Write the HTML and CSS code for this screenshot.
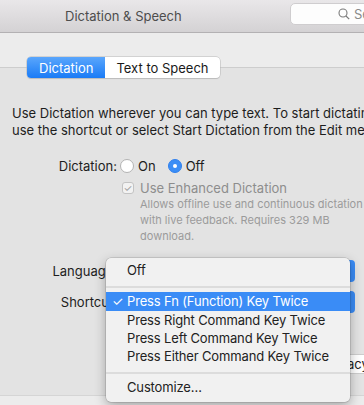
FILE: index.html
```html
<!DOCTYPE html>
<html lang="en">
  <head>
    <meta charset="UTF-8" />
    <title>Dictation &amp; Speech</title>
    <link rel="stylesheet" href="styles.css">
  </head>
  <body>
    <!-- Toolbar -->
    <header class="toolbar">
      <span class="title">Dictation &amp; Speech</span>
      <div class="search">
        <svg width="12" height="12" viewBox="0 0 12 12">
          <circle cx="5" cy="5" r="4" fill="none" stroke="#7a7a7a" stroke-width="1.1" />
          <line x1="8" y1="8" x2="11.2" y2="11.2" stroke="#7a7a7a" stroke-width="1.2" />
        </svg>
        <span>Search</span>
      </div>
    </header>

    <!-- Tabs -->
    <div class="tab-area">
      <div class="segmented">
        <span class="seg active">Dictation</span>
        <span class="seg">Text to Speech</span>
      </div>
    </div>

    <!-- Content box -->
    <main class="box">
      <p class="intro">
        Use Dictation wherever you can type text. To start dictating,<br />
        use the shortcut or select Start Dictation from the Edit menu.
      </p>

      <div class="row">
        <span class="label">Dictation:</span>
        <span class="radio"></span><span class="opt">On</span>
        <span class="radio checked"></span><span class="opt">Off</span>
      </div>

      <div class="check-row">
        <span class="checkbox">&#10003;</span>
        <span>Use Enhanced Dictation</span>
      </div>
      <p class="note">
        Allows offline use and continuous dictation<br />
        with live feedback. Requires 329 MB<br />
        download.
      </p>

      <div class="row popup-row lang-row">
        <span class="label">Language:</span>
        <span class="popup"></span>
      </div>
      <div class="row popup-row">
        <span class="label">Shortcut:</span>
        <span class="popup"></span>
      </div>

      <div class="privacy-row">
        <span class="button">About Dictation and Privacy&hellip;</span>
      </div>

      <!-- Open shortcut menu -->
      <ul class="menu">
        <li>Off</li>
        <li class="sep"></li>
        <li class="selected"><span class="tick">&#10003;</span>Press Fn (Function) Key Twice</li>
        <li>Press Right Command Key Twice</li>
        <li>Press Left Command Key Twice</li>
        <li>Press Either Command Key Twice</li>
        <li class="sep"></li>
        <li>Customize&hellip;</li>
      </ul>
    </main>
    <div class="footer"></div>
  </body>
</html>
```

FILE: styles.css
```css
/* Basic Reset */
* {
  margin: 0;
  padding: 0;
  box-sizing: border-box;
}

body {
  font-family: Inter, "Noto Sans", sans-serif;
  font-size: 13px;
  color: #1d1d1d;
  background-color: #ececec;
  width: 364px;
  height: 405px;
  overflow: hidden;
}

/* Toolbar */
.toolbar {
  height: 33px;
  display: flex;
  align-items: center;
  background: linear-gradient(#e9e7e9, #d4d2d4);
  border-bottom: 1px solid #b3b1b3;
  position: relative;
}

.toolbar .title {
  margin-left: 65px;
  color: #4d4d4d;
  font-size: 13px;
}

.search {
  position: absolute;
  left: 290px;
  top: 3px;
  width: 120px;
  height: 22px;
  background: #fdfdfd;
  border: 1px solid #cfcdcf;
  border-radius: 5px;
  display: flex;
  align-items: center;
  gap: 4px;
  padding-left: 47px;
  color: #8a8a8a;
}

/* Tabs */
.tab-area {
  padding: 24px 0 0 27px;
  margin-bottom: -11px;
  position: relative;
  z-index: 2;
}

.segmented {
  display: inline-flex;
  height: 21px;
  border-radius: 4px;
  background: #fff;
  box-shadow: 0 0 0 0.5px #b8b8b8, 0 1px 1px rgba(0, 0, 0, 0.15);
  overflow: hidden;
}

.seg {
  display: flex;
  align-items: center;
  padding: 0 11px;
  color: #1a1a1a;
}

.seg.active {
  background: linear-gradient(#5aa6fc, #1a7bf6);
  color: #fff;
  padding: 0 12px;
}

/* Content box */
.box {
  position: relative;
  background: #e3e3e3;
  border-top: 1px solid #cdcdcd;
  border-bottom: 1px solid #d5d5d5;
  height: 329px;
  padding: 37px 0 0 12px;
}

.intro {
  line-height: 17px;
  white-space: nowrap;
}

.row {
  display: flex;
  align-items: center;
  height: 17px;
  margin-top: 18px;
}

.label {
  width: 108px;
  text-align: right;
  padding-right: 3px;
}

.radio {
  width: 14px;
  height: 14px;
  border-radius: 50%;
  background: #fff;
  border: 1px solid #b3b3b3;
  margin-right: 4px;
}

.radio.checked {
  background: #3b8ef6;
  border-color: #3080ee;
  position: relative;
}

.radio.checked::after {
  content: "";
  position: absolute;
  left: 4px;
  top: 4px;
  width: 4px;
  height: 4px;
  border-radius: 50%;
  background: #fff;
}

.opt {
  margin-right: 12px;
}

.check-row {
  display: flex;
  align-items: center;
  gap: 6px;
  margin: 5px 0 0 110px;
  color: #8d8d8d;
  height: 17px;
}

.checkbox {
  width: 12px;
  height: 12px;
  border: 1px solid #c3c3c3;
  border-radius: 3px;
  background: #f2f2f2;
  font-size: 10px;
  line-height: 10px;
  text-align: center;
  color: #9a9a9a;
}

.note {
  margin: 0 0 0 128px;
  font-size: 11px;
  line-height: 16px;
  color: #9b9b9b;
  white-space: nowrap;
}

.lang-row {
  margin-top: 15px;
}

.popup-row {
  height: 24px;
}

.popup-row + .popup-row {
  margin-top: 7px;
}

.popup {
  flex: 1;
  height: 22px;
  margin-right: 9px;
  border-radius: 4px;
  background: linear-gradient(to right, #fff 85%, #3a8cf6 85%);
}

.privacy-row {
  display: flex;
  justify-content: flex-end;
  margin-top: 41px;
}

.button {
  background: #fff;
  border-radius: 4px;
  box-shadow: 0 0 0 0.5px #b8b8b8;
  padding: 1px 8px;
  margin-right: -23px;
  white-space: nowrap;
}

/* Popup menu */
.menu {
  position: absolute;
  left: 106px;
  top: 190px;
  width: 244px;
  list-style: none;
  background: #f1f1f1;
  border-radius: 5px;
  padding: 3px 0 6px;
  box-shadow: 0 0 0 0.5px rgba(0, 0, 0, 0.2), 0 4px 12px rgba(0, 0, 0, 0.3);
  z-index: 5;
}

.menu li {
  height: 18px;
  line-height: 18px;
  padding-left: 21px;
  color: #222;
  letter-spacing: -0.15px;
  position: relative;
}

.menu li.selected {
  height: 19px;
  line-height: 19px;
  background: #3a8cf6;
  color: #fff;
}

.menu .tick {
  position: absolute;
  left: 6px;
}

.menu li.sep {
  height: 2px;
  margin: 7px 0 4px;
  background: #dcdcdc;
  padding: 0;
}

.footer {
  height: 10px;
}
```
